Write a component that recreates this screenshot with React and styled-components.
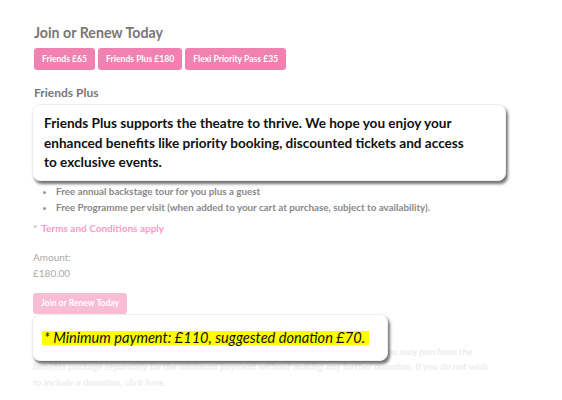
import React from "react";
import styled, { createGlobalStyle } from "styled-components";

const Global = createGlobalStyle`
  html, body { margin: 0; padding: 0; background: #fff; }
  body { font-family: Lato, "Open Sans", sans-serif; }
`;

const Page = styled.div`
  width: 562px;
  height: 400px;
  overflow: hidden;
  box-sizing: border-box;
  padding: 24px 0 0 33px;
`;

const Title = styled.h2`
  margin: 0 0 0 1px;
  font-size: 14.2px;
  font-weight: 700;
  color: #777;
  line-height: 18px;
`;

const Tabs = styled.div`
  display: flex;
  gap: 3px;
  margin-top: 6px;
  margin-left: 1px;
`;

const Tab = styled.button`
  border: none;
  background: ${(p) => (p.$muted ? "#f8bcd5" : "#f081b1")};
  color: #fff;
  font-family: Lato, sans-serif;
  font-weight: 700;
  font-size: 8.6px;
  height: 22px;
  padding: 0 8px;
  border-radius: 3px;
  cursor: pointer;
`;

const SubTitle = styled.h3`
  margin: 15px 0 0 1px;
  font-size: 12px;
  font-weight: 700;
  color: #777;
  line-height: 16px;
`;

const Callout = styled.div`
  background: #fff;
  border-radius: 8px;
  border: 1px solid #eee;
  box-shadow: 2px 3px 3px rgba(0, 0, 0, 0.55);
  box-sizing: border-box;
`;

const Intro = styled(Callout)`
  width: 474px;
  margin: 3px 0 0 -1px;
  padding: 9px 40px 7px 11px;
  font-size: 13.6px;
  font-weight: 700;
  line-height: 19.5px;
  color: #111;
`;

const List = styled.ul`
  margin: 2px 0 0;
  padding: 0 0 0 23px;
  color: #888;
  font-size: 9.8px;
  font-weight: 700;
  line-height: 16px;
  li::marker { color: #999; }
`;

const Terms = styled.div`
  margin-top: 6px;
  font-size: 10px;
  font-weight: 700;
  color: #f79cc6;
  line-height: 14px;
  span { color: #aaa; margin-right: 4px; font-weight: 400; }
`;

const Label = styled.div`
  margin-top: ${(p) => p.$top || 0}px;
  font-size: 10px;
  color: #aaa;
  line-height: 16px;
`;

const Submit = styled(Tab)`
  display: block;
  margin-top: 12px;
  height: 21px;
`;

const DonationWrap = styled.div`
  position: relative;
  margin-top: 30px;
`;

const Faint = styled.p`
  margin: 0;
  font-style: italic;
  font-weight: 700;
  font-size: 9.8px;
  line-height: 15.5px;
  color: #eeeeee;
  white-space: nowrap;
`;

const MinCallout = styled(Callout)`
  position: absolute;
  left: -1px;
  top: -30px;
  width: 356px;
  height: 47px;
  display: flex;
  align-items: center;
  padding: 2px 0 0 9px;
`;

const Highlight = styled.span`
  background: #ffff00;
  color: #111;
  font-style: italic;
  font-size: 14.6px;
  line-height: 14px;
  padding: 0 4px 0 2px;
`;

export default function App() {
  return (
    <Page>
      <Global />
      <Title>Join or Renew Today</Title>
      <Tabs>
        <Tab>Friends £65</Tab>
        <Tab>Friends Plus £180</Tab>
        <Tab>Flexi Priority Pass £35</Tab>
      </Tabs>
      <SubTitle>Friends Plus</SubTitle>
      <Intro>
        Friends Plus supports the theatre to thrive. We hope you enjoy your
        enhanced benefits like priority booking, discounted tickets and access
        to exclusive events.
      </Intro>
      <List>
        <li>Free annual backstage tour for you plus a guest</li>
        <li>Free Programme per visit (when added to your cart at purchase, subject to availability).</li>
      </List>
      <Terms>
        <span>*</span>Terms and Conditions apply
      </Terms>
      <Label $top={14}>Amount:</Label>
      <Label>£180.00</Label>
      <Submit $muted>Join or Renew Today</Submit>
      <DonationWrap>
        <Faint>
          * Minimum payment: £110, suggested donation £70. If you would rather not donate, you may purchase the
          <br />
          benefits package separately for the minimum payment without making any further donation. If you do not wish
          <br />
          to include a donation, click here.
        </Faint>
        <MinCallout>
          <Highlight>* Minimum payment: £110, suggested donation £70.</Highlight>
        </MinCallout>
      </DonationWrap>
    </Page>
  );
}
